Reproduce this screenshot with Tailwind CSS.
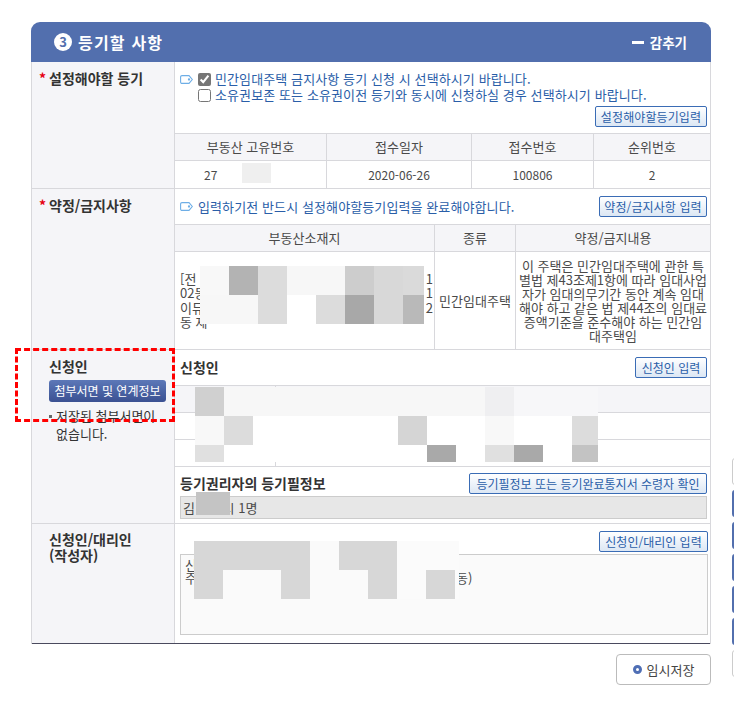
<!DOCTYPE html>
<html lang="ko">
<head>
    <meta charset="UTF-8">
    <title>등기할 사항</title>
    <script src="https://cdn.jsdelivr.net/npm/@tailwindcss/browser@4"></script>
</head>
<body class="bg-white">
<div class="relative w-[734px] h-[713px] overflow-hidden pt-[22px] pl-[31px] font-['Noto_Sans_CJK_KR','Noto_Sans',sans-serif] text-[13px] text-[#4a4a4a]">

    <!-- header -->
    <div class="w-[680px] h-[40px] bg-[#526fae] rounded-t-[9px] flex items-center pl-[23px] pr-[24px] text-white">
        <span class="w-[18px] h-[18px] rounded-full bg-white text-[#526fae] text-[13px] font-bold flex items-center justify-center">3</span>
        <span class="ml-[6px] text-[16px] font-bold tracking-[1.2px]">등기할 사항</span>
        <span class="ml-auto w-[12px] h-[3px] bg-white"></span>
        <span class="ml-[6px] text-[13.5px] font-bold">감추기</span>
    </div>

    <div class="w-[680px] border-x border-[#d8d8dc]">

        <!-- 설정해야할 등기 -->
        <div class="flex h-[127px] border-b border-[#d8d8dc]">
            <div class="w-[143px] shrink-0 bg-[#f5f5f8] border-r border-[#d8d8dc] pl-[7px] pt-[7px] flex text-[#333] text-[14px] font-bold leading-[18px]">
                <span class="w-[10px] text-[#e60012]">*</span><span>설정해야할 등기</span>
            </div>
            <div class="flex-1 flex flex-col">
                <div class="h-[71px] pl-[5px] pr-[3px] pt-[9px] text-[#2a5ea8] leading-[16px] tracking-[0.1px]">
                    <div class="flex items-center">
                        <svg class="w-[13px] h-[9px] mr-[5px] shrink-0" viewBox="0 0 13 9" fill="none" stroke="#6eaee6" stroke-width="1.1"><path d="M2 .6h7l3.3 3.9L9 8.4H2A1.4 1.4 0 0 1 .6 7V2A1.4 1.4 0 0 1 2 .6z"/><circle cx="9" cy="4.5" r=".6"/></svg>
                        <input type="checkbox" checked class="w-[13px] h-[13px] m-0 mr-[4px] accent-[#767676]">
                        <span>민간임대주택 금지사항 등기 신청 시 선택하시기 바랍니다.</span>
                    </div>
                    <div class="flex items-center pl-[18px]">
                        <input type="checkbox" class="w-[13px] h-[13px] m-0 mr-[4px]">
                        <span>소유권보존 또는 소유권이전 등기와 동시에 신청하실 경우 선택하시기 바랍니다.</span>
                    </div>
                    <div class="flex justify-end mt-[3px]">
                        <button class="h-[21px] w-[112px] border border-[#3a6cb5] rounded-[2px] bg-gradient-to-b from-white to-[#dce7f4] text-[#2a5ea8] text-[12px] leading-none">설정해야할등기입력</button>
                    </div>
                </div>
                <div class="grid grid-cols-[152px_145px_122px_1fr] border-t border-[#d8d8dc] text-center">
                    <div class="h-[27px] leading-[26px] bg-[#f5f5f8] border-b border-r border-[#d8d8dc]">부동산 고유번호</div>
                    <div class="h-[27px] leading-[26px] bg-[#f5f5f8] border-b border-r border-[#d8d8dc]">접수일자</div>
                    <div class="h-[27px] leading-[26px] bg-[#f5f5f8] border-b border-r border-[#d8d8dc]">접수번호</div>
                    <div class="h-[27px] leading-[26px] bg-[#f5f5f8] border-b border-[#d8d8dc]">순위번호</div>
                    <div class="h-[27px] leading-[27px] border-r border-[#d8d8dc] text-left pl-[29px] text-[12px]">27</div>
                    <div class="h-[27px] leading-[27px] border-r border-[#d8d8dc] text-[12px]">2020-06-26</div>
                    <div class="h-[27px] leading-[27px] border-r border-[#d8d8dc] text-[12px]">100806</div>
                    <div class="h-[27px] leading-[27px] text-[12px]">2</div>
                </div>
            </div>
        </div>

        <!-- 약정/금지사항 -->
        <div class="flex h-[161px] border-b border-[#d8d8dc]">
            <div class="w-[143px] shrink-0 bg-[#f5f5f8] border-r border-[#d8d8dc] pl-[7px] pt-[7px] flex text-[#333] text-[14px] font-bold leading-[18px]">
                <span class="w-[10px] text-[#e60012]">*</span><span>약정/금지사항</span>
            </div>
            <div class="flex-1 flex flex-col">
                <div class="h-[35px] pl-[5px] pr-[3px] flex items-center text-[#2a5ea8] tracking-[0.1px]">
                    <svg class="w-[13px] h-[9px] mr-[5px] shrink-0" viewBox="0 0 13 9" fill="none" stroke="#6eaee6" stroke-width="1.1"><path d="M2 .6h7l3.3 3.9L9 8.4H2A1.4 1.4 0 0 1 .6 7V2A1.4 1.4 0 0 1 2 .6z"/><circle cx="9" cy="4.5" r=".6"/></svg>
                    <span>입력하기전 반드시 설정해야할등기입력을 완료해야합니다.</span>
                    <button class="ml-auto h-[21px] w-[108px] border border-[#3a6cb5] rounded-[2px] bg-gradient-to-b from-white to-[#dce7f4] text-[#2a5ea8] text-[12px] leading-none">약정/금지사항 입력</button>
                </div>
                <div class="grid grid-cols-[260px_81px_1fr] border-t border-[#d8d8dc] text-center">
                    <div class="h-[27px] leading-[26px] bg-[#f5f5f8] border-b border-r border-[#d8d8dc]">부동산소재지</div>
                    <div class="h-[27px] leading-[26px] bg-[#f5f5f8] border-b border-r border-[#d8d8dc]">종류</div>
                    <div class="h-[27px] leading-[26px] bg-[#f5f5f8] border-b border-[#d8d8dc]">약정/금지내용</div>
                    <div class="h-[97px] border-r border-[#d8d8dc] pl-[5px] pr-[1px] flex flex-col justify-center leading-[14.5px] text-left">
                        <div class="flex justify-between"><span>[전</span><span>1</span></div>
                        <div class="flex justify-between"><span>02동</span><span>1</span></div>
                        <div class="flex justify-between"><span>이뮤</span><span>2</span></div>
                        <div>동 제</div>
                    </div>
                    <div class="h-[97px] border-r border-[#d8d8dc] flex items-center justify-center whitespace-nowrap">민간임대주택</div>
                    <div class="h-[97px] flex items-center justify-center leading-[14px] text-[13px] whitespace-nowrap">
                        <div>이 주택은 민간임대주택에 관한 특<br>별법 제43조제1항에 따라 임대사업<br>자가 임대의무기간 동안 계속 임대<br>해야 하고 같은 법 제44조의 임대료<br>증액기준을 준수해야 하는 민간임<br>대주택임</div>
                    </div>
                </div>
            </div>
        </div>

        <!-- 신청인 -->
        <div class="flex h-[174px] border-b border-[#d8d8dc]">
            <div class="w-[143px] shrink-0 bg-[#f5f5f8] border-r border-[#d8d8dc] pl-[17px] pt-[7px]">
                <div class="text-[#333] text-[14px] font-bold leading-[18px]">신청인</div>
                <button class="mt-[5px] w-[117px] h-[22px] rounded-[3px] bg-gradient-to-b from-[#5c78b8] to-[#3b5192] text-white text-[12px] leading-none">첨부서면 및 연계정보</button>
                <div class="mt-[5px] flex text-[#333] leading-[18px]">
                    <span class="w-[3px] h-[3px] bg-[#666] mt-[8px] mr-[4px] shrink-0"></span>
                    <span>저장된 첨부서면이<br>없습니다.</span>
                </div>
            </div>
            <div class="flex-1 flex flex-col">
                <div class="h-[35px] pl-[5px] pr-[3px] flex items-center">
                    <span class="text-[#333] text-[14px] font-bold">신청인</span>
                    <button class="ml-auto h-[21px] w-[72px] border border-[#3a6cb5] rounded-[2px] bg-gradient-to-b from-white to-[#dce7f4] text-[#2a5ea8] text-[12px] leading-none">신청인 입력</button>
                </div>
                <div class="grid grid-cols-[101px_1fr] border-t border-[#d8d8dc]">
                    <div class="h-[27px] bg-[#f5f5f8] border-b border-r border-[#d8d8dc]"></div>
                    <div class="h-[27px] bg-[#f5f5f8] border-b border-[#d8d8dc]"></div>
                    <div class="h-[27px] border-b border-r border-[#d8d8dc]"></div>
                    <div class="h-[27px] border-b border-[#d8d8dc]"></div>
                    <div class="h-[27px] border-b border-r border-[#d8d8dc]"></div>
                    <div class="h-[27px] border-b border-[#d8d8dc]"></div>
                </div>
                <div class="pl-[5px] pr-[3px] pt-[6px]">
                    <div class="flex items-center h-[21px]">
                        <span class="text-[#333] text-[14px] font-bold">등기권리자의 등기필정보</span>
                        <button class="ml-auto h-[21px] w-[238px] border border-[#3a6cb5] rounded-[2px] bg-gradient-to-b from-white to-[#dce7f4] text-[#2a5ea8] text-[12px] leading-none">등기필정보 또는 등기완료통지서 수령자 확인</button>
                    </div>
                    <div class="mt-[2px] h-[23px] bg-[#e7e7e7] border border-[#ccc] pl-[2px] leading-[21px]">김 <span class="ml-[24px]">시 1명</span></div>
                </div>
            </div>
        </div>

        <!-- 신청인/대리인 -->
        <div class="flex h-[120px] border-b border-[#4a4a5e]">
            <div class="w-[143px] shrink-0 bg-[#f5f5f8] border-r border-[#d8d8dc] pl-[17px] pt-[7px] text-[#333] text-[14px] font-bold leading-[16px]">
                신청인/대리인<br>(작성자)
            </div>
            <div class="flex-1 pl-[5px] pr-[2px] pt-[7px]">
                <div class="flex justify-end">
                    <button class="h-[21px] w-[109px] border border-[#3a6cb5] rounded-[2px] bg-gradient-to-b from-white to-[#dce7f4] text-[#2a5ea8] text-[12px] leading-none">신청인/대리인 입력</button>
                </div>
                <div class="mt-[2px] h-[81px] bg-[#fafafa] border border-[#ccc] pl-[4px] pt-[3px] leading-[13px]">
                    <div>신</div>
                    <div class="whitespace-nowrap"><span class="inline-block w-[271px]">주</span>동)</div>
                </div>
            </div>
        </div>
    </div>

    <!-- 임시저장 -->
    <div class="w-[680px] flex justify-end mt-[10px]">
        <button class="w-[95px] h-[31px] border border-[#bbb] rounded-[4px] bg-white flex items-center justify-center gap-[5px] text-[13px] text-[#444]">
            <span class="w-[9px] h-[9px] rounded-full border-[3px] border-[#4f6fb5]"></span>임시저장
        </button>
    </div>

    <!-- mosaic over masked personal data -->
    <div class="absolute left-[242px] top-[163px] w-[29px] h-[20px] bg-[#efefef]"></div>

    <div class="absolute left-[200px] top-[266px] flex flex-col">
        <div class="flex h-[29px]">
            <div class="w-[29px] bg-[#f8f8f8]"></div><div class="w-[29px] bg-[#b3b3b3]"></div><div class="w-[29px] bg-[#dcdcdc]"></div><div class="w-[58px] bg-[#f7f7f7]"></div><div class="w-[29px] bg-[#cdcdcd]"></div><div class="w-[29px] bg-[#d8d8d8]"></div><div class="w-[21px] bg-[#dadada]"></div>
        </div>
        <div class="flex h-[29px]">
            <div class="w-[58px] bg-[#f7f7f7]"></div><div class="w-[29px] bg-[#dcdcdc]"></div><div class="w-[29px] bg-white"></div><div class="w-[29px] bg-[#dcdcdc]"></div><div class="w-[29px] bg-[#a8a8a8]"></div><div class="w-[29px] bg-[#d8d8d8]"></div><div class="w-[21px] bg-[#b9b9b9]"></div>
        </div>
    </div>

    <div class="absolute left-[195px] top-[387px] flex flex-col">
        <div class="flex h-[29px]">
            <div class="w-[29px] bg-[#d0d0d0]"></div><div class="w-[261px] bg-[#f7f7f7]"></div><div class="w-[29px] bg-[#efeff1]"></div><div class="w-[84px] bg-[#f7f7f9]"></div>
        </div>
        <div class="flex h-[29px]">
            <div class="w-[29px] bg-[#f8f8f8]"></div><div class="w-[29px] bg-[#dcdcdc]"></div><div class="w-[145px] bg-white"></div><div class="w-[29px] bg-[#d5d5d5]"></div><div class="w-[58px] bg-white"></div><div class="w-[29px] bg-[#f8f8f8]"></div><div class="w-[58px] bg-white"></div><div class="w-[26px] bg-[#dcdcdc]"></div>
        </div>
        <div class="flex h-[17px]">
            <div class="w-[29px] bg-[#e0e0e0]"></div><div class="w-[203px] bg-white"></div><div class="w-[29px] bg-[#a9a9a9]"></div><div class="w-[29px] bg-white"></div><div class="w-[29px] bg-[#e0e0e0]"></div><div class="w-[29px] bg-[#a9a9a9]"></div><div class="w-[29px] bg-white"></div><div class="w-[26px] bg-[#c3c3c3]"></div>
        </div>
    </div>

    <div class="absolute left-[196px] top-[492px] w-[34px] h-[23px] bg-[#c4c4c4]"></div>

    <div class="absolute left-[194px] top-[541px] flex flex-col">
        <div class="flex h-[29px]">
            <div class="w-[116px] bg-[#d7d7d7]"></div><div class="w-[29px] bg-[#fafafa]"></div><div class="w-[58px] bg-[#d7d7d7]"></div><div class="w-[62px] bg-[#fbfbfb]"></div>
        </div>
        <div class="flex h-[29px]">
            <div class="w-[29px] bg-[#d7d7d7]"></div><div class="w-[58px] bg-[#fafafa]"></div><div class="w-[29px] bg-[#d7d7d7]"></div><div class="w-[58px] bg-[#fafafa]"></div><div class="w-[29px] bg-[#d7d7d7]"></div><div class="w-[29px] bg-[#fbfbfb]"></div><div class="w-[29px] bg-[#d7d7d7]"></div><div class="w-[4px] bg-[#fbfbfb]"></div>
        </div>
    </div>

    <!-- red dashed annotation -->
    <div class="absolute left-[15px] top-[348px] w-[160px] h-[74px] border-[3px] border-dashed border-[#f00]"></div>

    <!-- floating side menu, cut off by the window edge -->
    <div class="absolute left-[732px] top-[458px] w-[8px] h-[27px] border border-[#ccc] rounded-l-[3px] bg-white"></div>
    <div class="absolute left-[732px] top-[490px] w-[8px] h-[27px] rounded-l-[3px] bg-[#526fae]"></div>
    <div class="absolute left-[732px] top-[522px] w-[8px] h-[27px] rounded-l-[3px] bg-[#526fae]"></div>
    <div class="absolute left-[732px] top-[554px] w-[8px] h-[27px] rounded-l-[3px] bg-[#526fae]"></div>
    <div class="absolute left-[732px] top-[586px] w-[8px] h-[27px] rounded-l-[3px] bg-[#526fae]"></div>
    <div class="absolute left-[732px] top-[618px] w-[8px] h-[27px] rounded-l-[3px] bg-[#526fae]"></div>
    <div class="absolute left-[732px] top-[650px] w-[8px] h-[27px] border border-[#ccc] rounded-l-[3px] bg-white"></div>
</div>
</body>
</html>
